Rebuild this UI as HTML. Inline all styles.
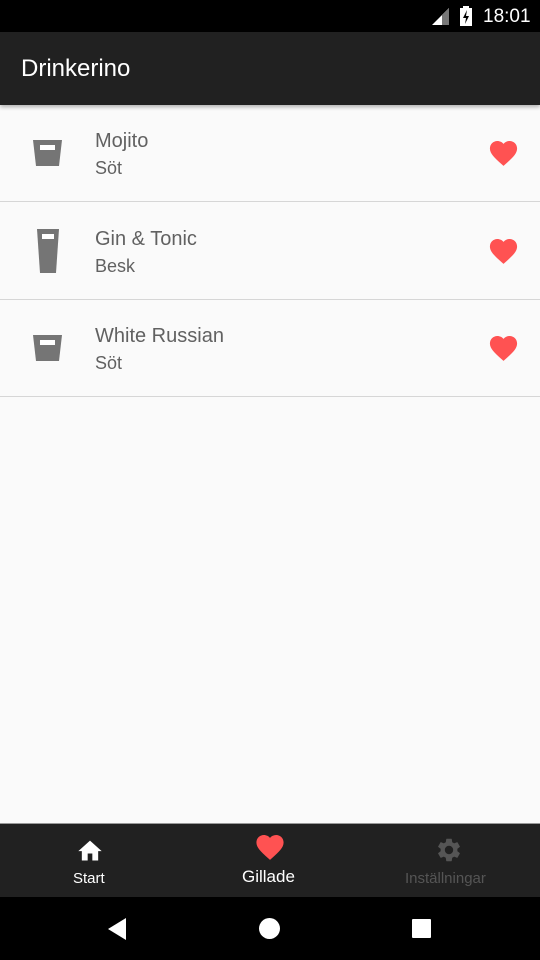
<!DOCTYPE html><html><head><style>
body{margin:0;width:540px;height:960px;background:#fafafa;font-family:"Liberation Sans",Roboto,sans-serif;position:relative;overflow:hidden}
.abs{position:absolute}
.row{position:absolute;left:0;width:540px;height:97px;border-bottom:1px solid #d6d6d6}
.t{position:absolute;left:95px;top:26px;font-size:20px;color:#616161}
.s{position:absolute;left:95px;top:54px;font-size:18px;color:#616161}
.h{position:absolute;left:489px;top:37px}
</style></head><body>
<div class="abs" style="left:0;top:0;width:540px;height:32px;background:#000"></div>
<svg class="abs" style="left:430px;top:8px" width="20" height="18"><polygon points="2,17 19,17 19,0" fill="#fff"/><polygon points="12,7 19,0 19,17 12,17" fill="#777"/></svg>
<svg class="abs" style="left:459px;top:6px" width="14" height="20"><rect x="1" y="2" width="12" height="18" fill="#fff"/><rect x="4" y="0" width="6" height="3" fill="#fff"/><polygon points="8,4 4,12 7,12 6,18 10,10 7,10" fill="#000"/></svg>
<div class="abs" style="left:483px;top:6px;color:#fff;font-size:19px">18:01</div>
<div class="abs" style="left:0;top:32px;width:540px;height:73px;background:#212121;box-shadow:0 2px 4px rgba(0,0,0,.3)"></div>
<div class="abs" style="left:21px;top:55px;color:#fff;font-size:24px">Drinkerino</div>

<div class="row" style="top:104px"><svg class="abs" style="left:33px;top:36px" width="29" height="26"><polygon points="0,0 29,0 26,26 3,26" fill="#757575"/><rect x="7" y="5" width="15" height="5" fill="#fff"/></svg><div class="t">Mojito</div><div class="s">Söt</div>
<svg class="h" width="29" height="25" viewBox="2 3 20 18.4"><path d="M12 21.35l-1.45-1.32C5.4 15.36 2 12.28 2 8.5 2 5.42 4.42 3 7.5 3c1.74 0 3.410.81 4.5 2.09C13.09 3.81 14.76 3 16.5 3 19.58 3 22 5.42 22 8.5c0 3.78-3.4 6.86-8.550 11.54z" fill="#ff5252"/></svg></div>
<div class="row" style="top:202px"><svg class="abs" style="left:37px;top:27px" width="22" height="44"><polygon points="0,0 22,0 19,44 3,44" fill="#757575"/><rect x="5" y="5" width="12" height="5" fill="#fff"/></svg><div class="t">Gin &amp; Tonic</div><div class="s">Besk</div>
<svg class="h" width="29" height="25" viewBox="2 3 20 18.4"><path d="M12 21.35l-1.45-1.32C5.4 15.36 2 12.28 2 8.5 2 5.42 4.42 3 7.5 3c1.74 0 3.41.81 4.5 2.09C13.09 3.81 14.76 3 16.5 3 19.58 3 22 5.42 22 8.5c0 3.78-3.4 6.86-8.55 11.54z" fill="#ff5252"/></svg></div>
<div class="row" style="top:299px"><svg class="abs" style="left:33px;top:36px" width="29" height="26"><polygon points="0,0 29,0 26,26 3,26" fill="#757575"/><rect x="7" y="5" width="15" height="5" fill="#fff"/></svg><div class="t">White Russian</div><div class="s">Söt</div>
<svg class="h" width="29" height="25" viewBox="2 3 20 18.4"><path d="M12 21.35l-1.45-1.32C5.4 15.36 2 12.28 2 8.5 2 5.42 4.42 3 7.5 3c1.74 0 3.41.81 4.5 2.09C13.09 3.81 14.76 3 16.5 3 19.58 3 22 5.420 22 8.5c0 3.78-3.4 6.86-8.55 11.54z" fill="#ff5252"/></svg></div>

<div class="abs" style="left:0;top:823px;width:540px;height:74px;background:#212121;border-top:1px solid #999"></div>
<svg class="abs" style="left:76px;top:837px" width="28" height="26" viewBox="0 0 24 22"><path d="M10 20v-6h4v6h5v-8h3L12 3 2 12h3v8z" fill="#fff"/></svg>
<div class="abs" style="left:73px;top:870px;color:#fff;font-size:15px">Start</div>
<svg class="abs" style="left:256px;top:835px" width="28" height="25" viewBox="2 3 20 18.4"><path d="M12 21.35l-1.45-1.32C5.4 15.36 2 12.28 2 8.5 2 5.42 4.42 3 7.5 3c1.74 0 3.41.81 4.5 2.09C13.09 3.81 14.76 3 16.5 3 19.58 3 22 5.42 22 8.5c0 3.78-3.4 6.86-8.55 11.54z" fill="#ff5252"/></svg>
<div class="abs" style="left:242px;top:867px;color:#fff;font-size:17px">Gillade</div>
<svg class="abs" style="left:435px;top:836px" width="28" height="28" viewBox="0 0 24 24"><path fill="#555" d="M19.14 12.94c.04-.3.06-.61.06-.94 0-.32-.02-.64-.07-.94l2.03-1.58a.49.49 0 00.12-.61l-1.92-3.32a.49.49 0 00-.59-.22l-2.39.96c-.5-.38-1.03-.7-1.62-.94l-.36-2.54a.48.48 0 00-.48-.41h-3.84c-.24 0-.43.17-.47.41l-.36 2.54c-.59.24-1.130.57-1.62.94l-2.39-.96a.49.49 0 00-.59.22L2.74 8.87c-.12.21-.08.47.12.61l2.03 1.58c-.05.3-.09.63-.09.94s.02.64.07.94l-2.03 1.58a.49.49 0 00-.12.61l1.92 3.32c.12.22.37.29.59.22l2.39-.96c.5.38 1.03.7 1.62.94l.36 2.54c.05.24.24.41.48.41h3.84c.24 0 .44-.17.47-.41l.36-2.54c.59-.24 1.13-.56 1.62-.94l2.39.96c.22.08.47 0 .59-.22l1.92-3.32c.12-.22.07-.47-.12-.61zM12 15.6A3.6 3.6 0 1112 8.4a3.6 3.6 0 010 7.2z"/></svg>
<div class="abs" style="left:405px;top:870px;color:#555;font-size:15px">Inställningar</div>
<div class="abs" style="left:0;top:897px;width:540px;height:63px;background:#000"></div>
<svg class="abs" style="left:108px;top:918px" width="20" height="22"><polygon points="18,0 18,22 0,11" fill="#fff"/></svg>
<div class="abs" style="left:259px;top:918px;width:21px;height:21px;border-radius:50%;background:#fff"></div>
<div class="abs" style="left:412px;top:919px;width:19px;height:19px;background:#fff;border-radius:1px"></div>
</body></html>
